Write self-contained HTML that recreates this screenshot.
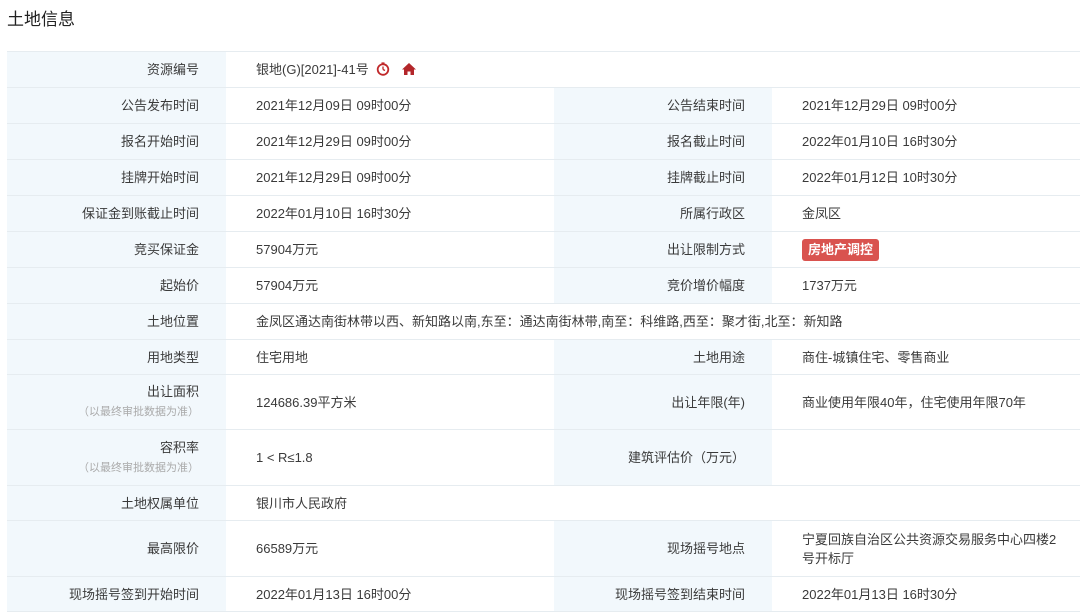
<!DOCTYPE html>
<html><head><meta charset="utf-8"><style>
body{margin:0;width:1080px;height:614px;background:#fff;overflow:hidden;font-family:"Liberation Sans","Noto Sans CJK SC",sans-serif;color:#3a3a3a;}
h1{position:absolute;left:7px;top:8px;margin:0;font-size:17px;font-weight:normal;color:#222;line-height:24px;}
table{position:absolute;left:7px;top:51px;border-collapse:collapse;table-layout:fixed;width:1080px;font-size:13px;}
td{border-top:1px solid #e6ecf0;border-bottom:1px solid #e6ecf0;padding:0;line-height:19px;vertical-align:middle;}
td.l{background:#f2f8fc;text-align:right;padding-right:27px;}
td.v{padding-left:30px;}
.s{font-size:11px;color:#aaa;}
.tag{display:inline-block;background:#d9534f;color:#fff;font-weight:bold;padding:1px 6px;border-radius:3px;line-height:20px;}
</style></head><body>
<h1>土地信息</h1>
<table>
<colgroup><col style="width:219px"><col style="width:328px"><col style="width:218px"><col style="width:315px"></colgroup>
<tr style="height:36px"><td class="l">资源编号</td><td class="v" colspan="3" style="border-left:0">银地(G)[2021]-41号 <svg width="14" height="14" viewBox="0 0 14 14" style="vertical-align:-2px;margin-left:4px"><circle cx="7" cy="7.5" r="5.3" fill="none" stroke="#c0282a" stroke-width="1.8"/><path d="M7 7.5 L7 4.5 M7 7.5 L9 8.5 M5.5 1 H8.5" stroke="#c0282a" stroke-width="1.3" fill="none"/></svg> <svg width="14" height="14" viewBox="0 0 14 14" style="vertical-align:-2px;margin-left:8px"><path d="M7 1 L14 7.5 H12 V13 H8.5 V9.5 H5.5 V13 H2 V7.5 H0 Z" fill="#b3262a"/></svg></td></tr>
<tr style="height:36px"><td class="l">公告发布时间</td><td class="v">2021年12月09日 09时00分</td><td class="l">公告结束时间</td><td class="v">2021年12月29日 09时00分</td></tr>
<tr style="height:36px"><td class="l">报名开始时间</td><td class="v">2021年12月29日 09时00分</td><td class="l">报名截止时间</td><td class="v">2022年01月10日 16时30分</td></tr>
<tr style="height:36px"><td class="l">挂牌开始时间</td><td class="v">2021年12月29日 09时00分</td><td class="l">挂牌截止时间</td><td class="v">2022年01月12日 10时30分</td></tr>
<tr style="height:36px"><td class="l">保证金到账截止时间</td><td class="v">2022年01月10日 16时30分</td><td class="l">所属行政区</td><td class="v">金凤区</td></tr>
<tr style="height:36px"><td class="l">竞买保证金</td><td class="v">57904万元</td><td class="l">出让限制方式</td><td class="v"><span class="tag">房地产调控</span></td></tr>
<tr style="height:36px"><td class="l">起始价</td><td class="v">57904万元</td><td class="l">竞价增价幅度</td><td class="v">1737万元</td></tr>
<tr style="height:36px"><td class="l">土地位置</td><td class="v" colspan="3">金凤区通达南街林带以西、新知路以南,东至：通达南街林带,南至：科维路,西至：聚才街,北至：新知路</td></tr>
<tr style="height:35px"><td class="l">用地类型</td><td class="v">住宅用地</td><td class="l">土地用途</td><td class="v">商住-城镇住宅、零售商业</td></tr>
<tr style="height:55px"><td class="l">出让面积<br><span class="s">（以最终审批数据为准）</span></td><td class="v">124686.39平方米</td><td class="l">出让年限(年)</td><td class="v">商业使用年限40年，住宅使用年限70年</td></tr>
<tr style="height:56px"><td class="l">容积率<br><span class="s">（以最终审批数据为准）</span></td><td class="v">1 &lt; R≤1.8</td><td class="l">建筑评估价（万元）</td><td class="v"></td></tr>
<tr style="height:35px"><td class="l">土地权属单位</td><td class="v" colspan="3">银川市人民政府</td></tr>
<tr style="height:56px"><td class="l">最高限价</td><td class="v">66589万元</td><td class="l">现场摇号地点</td><td class="v" style="padding-right:18px">宁夏回族自治区公共资源交易服务中心四楼2<br>号开标厅</td></tr>
<tr style="height:35px"><td class="l">现场摇号签到开始时间</td><td class="v">2022年01月13日 16时00分</td><td class="l">现场摇号签到结束时间</td><td class="v">2022年01月13日 16时30分</td></tr>
</table>
</body></html>
